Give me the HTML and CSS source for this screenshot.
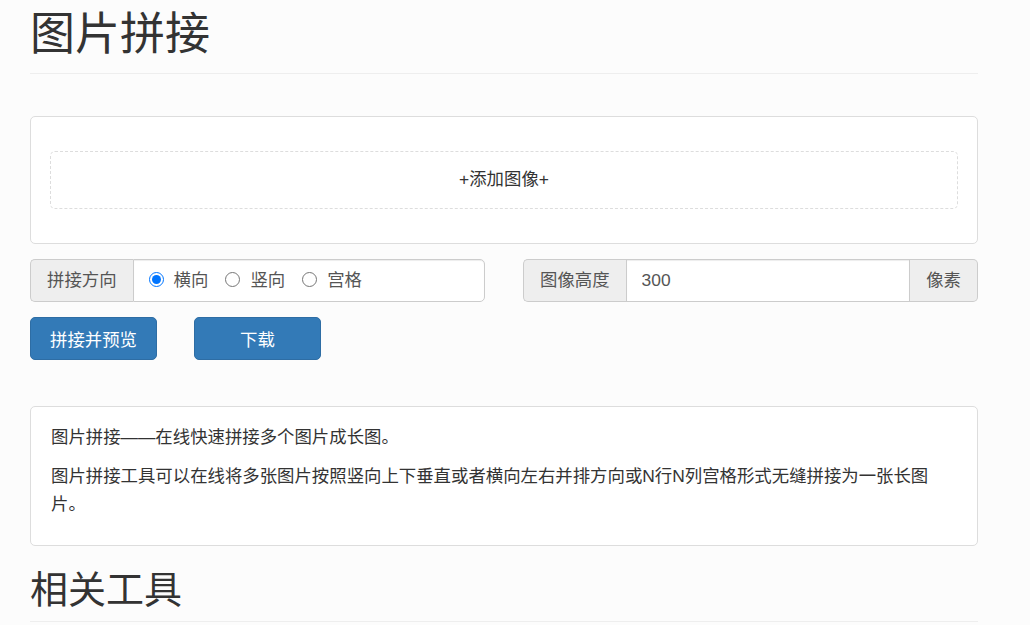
FILE: index.html
```html
<!DOCTYPE html>
<html lang="zh-CN">
<head>
    <meta charset="UTF-8">
    <meta name="viewport" content="width=device-width, initial-scale=1.0">
    <title>图片拼接</title>
    <link rel="stylesheet" href="styles.css">
</head>
<body>
    <div class="container">
        <div class="page-header">
            <h1>图片拼接</h1>
        </div>

        <div class="panel upload-panel">
            <div class="drop-zone">+添加图像+</div>
        </div>

        <div class="options">
            <div class="input-group">
                <span class="addon">拼接方向</span>
                <div class="form-control radios">
                    <label class="radio-inline"><input type="radio" name="direction" checked>横向</label>
                    <label class="radio-inline"><input type="radio" name="direction">竖向</label>
                    <label class="radio-inline"><input type="radio" name="direction">宫格</label>
                </div>
            </div>
            <div class="input-group">
                <span class="addon">图像高度</span>
                <input type="text" class="form-control" value="300">
                <span class="addon addon-last">像素</span>
            </div>
        </div>

        <div class="actions">
            <button class="btn">拼接并预览</button>
            <button class="btn">下载</button>
        </div>

        <div class="panel info-panel">
            <p>图片拼接——在线快速拼接多个图片成长图。</p>
            <p>图片拼接工具可以在线将多张图片按照竖向上下垂直或者横向左右并排方向或N行N列宫格形式无缝拼接为一张长图片。</p>
        </div>

        <div class="page-header related">
            <h2>相关工具</h2>
        </div>
    </div>
</body>
</html>
```

FILE: styles.css
```css
body {
    font-family: "Liberation Sans", "Noto Sans CJK SC", sans-serif;
    font-size: 17.4px;
    line-height: 1.42857;
    color: #333;
    background-color: #fcfcfc;
    margin: 0;
    padding: 0;
}
.container {
    width: 948px;
    margin-left: 30px;
    padding-top: 10px;
}
.page-header {
    border-bottom: 1px solid #eee;
    padding-bottom: 13px;
}
h1 {
    font-size: 45px;
    font-weight: 400;
    line-height: 1.1;
    margin: 0;
}
h2 {
    font-size: 38px;
    font-weight: 400;
    line-height: 1.1;
    margin: 0;
}
.related {
    margin-top: 24px;
    padding-bottom: 10px;
}
.panel {
    background-color: #fff;
    border: 1px solid #ddd;
    border-radius: 5px;
}
.upload-panel {
    margin-top: 42px;
    padding: 34px 19px;
}
.drop-zone {
    height: 56px;
    border: 1px dashed #ddd;
    border-radius: 5px;
    display: flex;
    align-items: center;
    justify-content: center;
    color: #333;
}
.options {
    display: grid;
    grid-template-columns: 1fr 1fr;
    column-gap: 38px;
    margin-top: 15px;
}
.input-group {
    display: flex;
    height: 43px;
}
.addon {
    display: flex;
    align-items: center;
    padding: 0 16px;
    background-color: #eee;
    border: 1px solid #ccc;
    border-right: 0;
    border-radius: 5px 0 0 5px;
    color: #555;
}
.addon-last {
    border-right: 1px solid #ccc;
    border-left: 0;
    border-radius: 0 5px 5px 0;
}
.form-control {
    flex: 1;
    min-width: 0;
    box-sizing: border-box;
    height: 43px;
    margin: 0;
    padding: 0 15px;
    border: 1px solid #ccc;
    background-color: #fff;
    box-shadow: inset 0 1px 1px rgba(0, 0, 0, 0.075);
    font-family: inherit;
    font-size: 17.4px;
    color: #555;
    outline: none;
}
.radios {
    display: flex;
    align-items: center;
    border-radius: 0 5px 5px 0;
}
.radio-inline {
    display: flex;
    align-items: center;
    color: #555;
    margin-right: 17px;
}
.radio-inline input {
    width: 15px;
    height: 15px;
    margin: 0 10px 0 0;
}
.actions {
    display: flex;
    gap: 37px;
    margin-top: 15px;
}
.btn {
    width: 127px;
    height: 43px;
    background-color: #337ab7;
    border: 1px solid #2e6da4;
    border-radius: 5px;
    color: #fff;
    font-family: inherit;
    font-size: 17.4px;
    cursor: pointer;
}
.btn:hover {
    background-color: #286090;
}
.info-panel {
    margin-top: 46px;
    padding: 16px 20px 16px;
}
.info-panel p {
    margin: 0 0 11px;
    line-height: 28px;
}
```
